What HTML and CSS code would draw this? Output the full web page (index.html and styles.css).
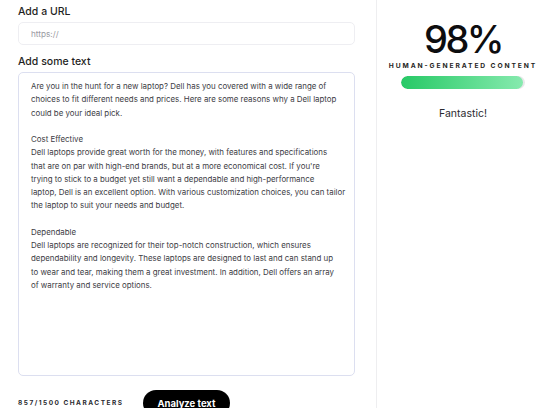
FILE: index.html
```html
<!DOCTYPE html>
<html lang="en">
<head>
  <meta charset="UTF-8">
  <title>AI Content Detector</title>
  <link rel="stylesheet" href="styles.css">
</head>
<body>
  <div class="page">
    <main class="editor">
      <label class="field-label" for="url">Add a URL</label>
      <input id="url" class="url-input" type="text" placeholder="https://">

      <label class="field-label">Add some text</label>
      <div class="text-box">
        <p>Are you in the hunt for a new laptop? Dell has you covered with a wide range of<br>
        choices to fit different needs and prices. Here are some reasons why a Dell laptop<br>
        could be your ideal pick.</p>
        <p>Cost Effective<br>
        Dell laptops provide great worth for the money, with features and specifications<br>
        that are on par with high-end brands, but at a more economical cost. If you're<br>
        trying to stick to a budget yet still want a dependable and high-performance<br>
        laptop, Dell is an excellent option. With various customization choices, you can tailor<br>
        the laptop to suit your needs and budget.</p>
        <p>Dependable<br>
        Dell laptops are recognized for their top-notch construction, which ensures<br>
        dependability and longevity. These laptops are designed to last and can stand up<br>
        to wear and tear, making them a great investment. In addition, Dell offers an array<br>
        of warranty and service options.</p>
      </div>

      <div class="actions">
        <span class="counter">857/1500 characters</span>
        <button class="analyze-btn">Analyze text</button>
      </div>
    </main>

    <aside class="result">
      <div class="score">98%</div>
      <div class="score-label">Human-generated content</div>
      <div class="meter"><div class="meter-fill" style="width: 98%"></div></div>
      <div class="verdict">Fantastic!</div>
    </aside>
  </div>
</body>
</html>
```

FILE: styles.css
```css
* { box-sizing: border-box; }
html, body { margin: 0; padding: 0; }
body {
  font-family: Inter, "Open Sans", sans-serif;
  color: #1f1f24;
  background: #fff;
}
.page {
  display: flex;
  height: 408px;
  overflow: hidden;
}
.editor {
  width: 376px;
  flex-shrink: 0;
  padding: 5px 21px 0 18px;
  display: flex;
  flex-direction: column;
}
.editor > * { flex-shrink: 0; }
.field-label {
  font-size: 10.5px;
  line-height: 14px;
  font-weight: 500;
  margin-bottom: 3px;
}
.url-input {
  width: 100%;
  height: 23px;
  border: 1px solid #eeeef2;
  border-radius: 5px;
  padding: 0 12px;
  font-family: inherit;
  font-size: 8.2px;
  color: #333;
  margin-bottom: 10px;
}
.url-input::placeholder { color: #9a9aa2; }
.text-box {
  height: 304px;
  border: 1px solid #dcdff0;
  border-radius: 5px;
  padding: 7px 12px;
  font-size: 7.9px;
  line-height: 13.25px;
  color: #3c3c44;
}
.text-box p { margin: 0 0 13.25px; white-space: nowrap; }
.actions {
  display: flex;
  align-items: center;
  gap: 20px;
  margin-top: 14px;
  height: 26px;
}
.counter {
  font-size: 6.5px;
  font-weight: 700;
  letter-spacing: 1.5px;
  text-transform: uppercase;
  color: #2a2a30;
}
.analyze-btn {
  background: #000;
  color: #fff;
  border: none;
  border-radius: 14px;
  height: 26px;
  padding: 0 14px;
  font-family: inherit;
  font-size: 9.5px;
  font-weight: 700;
}
.result {
  flex: 1;
  border-left: 1px solid #eeeef0;
  display: flex;
  flex-direction: column;
  align-items: center;
  padding: 17px 0 0 9px;
}
.score {
  font-size: 38px;
  font-weight: 500;
  letter-spacing: -2.5px;
  color: #0d0d0f;
  line-height: 44px;
}
.score-label {
  font-size: 6.7px;
  font-weight: 700;
  letter-spacing: 1.9px;
  text-transform: uppercase;
  margin-top: 1px;
}
.meter {
  width: 124px;
  height: 13px;
  border-radius: 7px;
  background: #e8e8ea;
  margin-top: 6px;
  overflow: hidden;
}
.meter-fill {
  height: 100%;
  border-radius: 7px;
  background: linear-gradient(90deg, #27c966, #86eaae);
}
.verdict {
  font-size: 10.5px;
  margin-top: 18px;
  color: #2a2a30;
}
```
